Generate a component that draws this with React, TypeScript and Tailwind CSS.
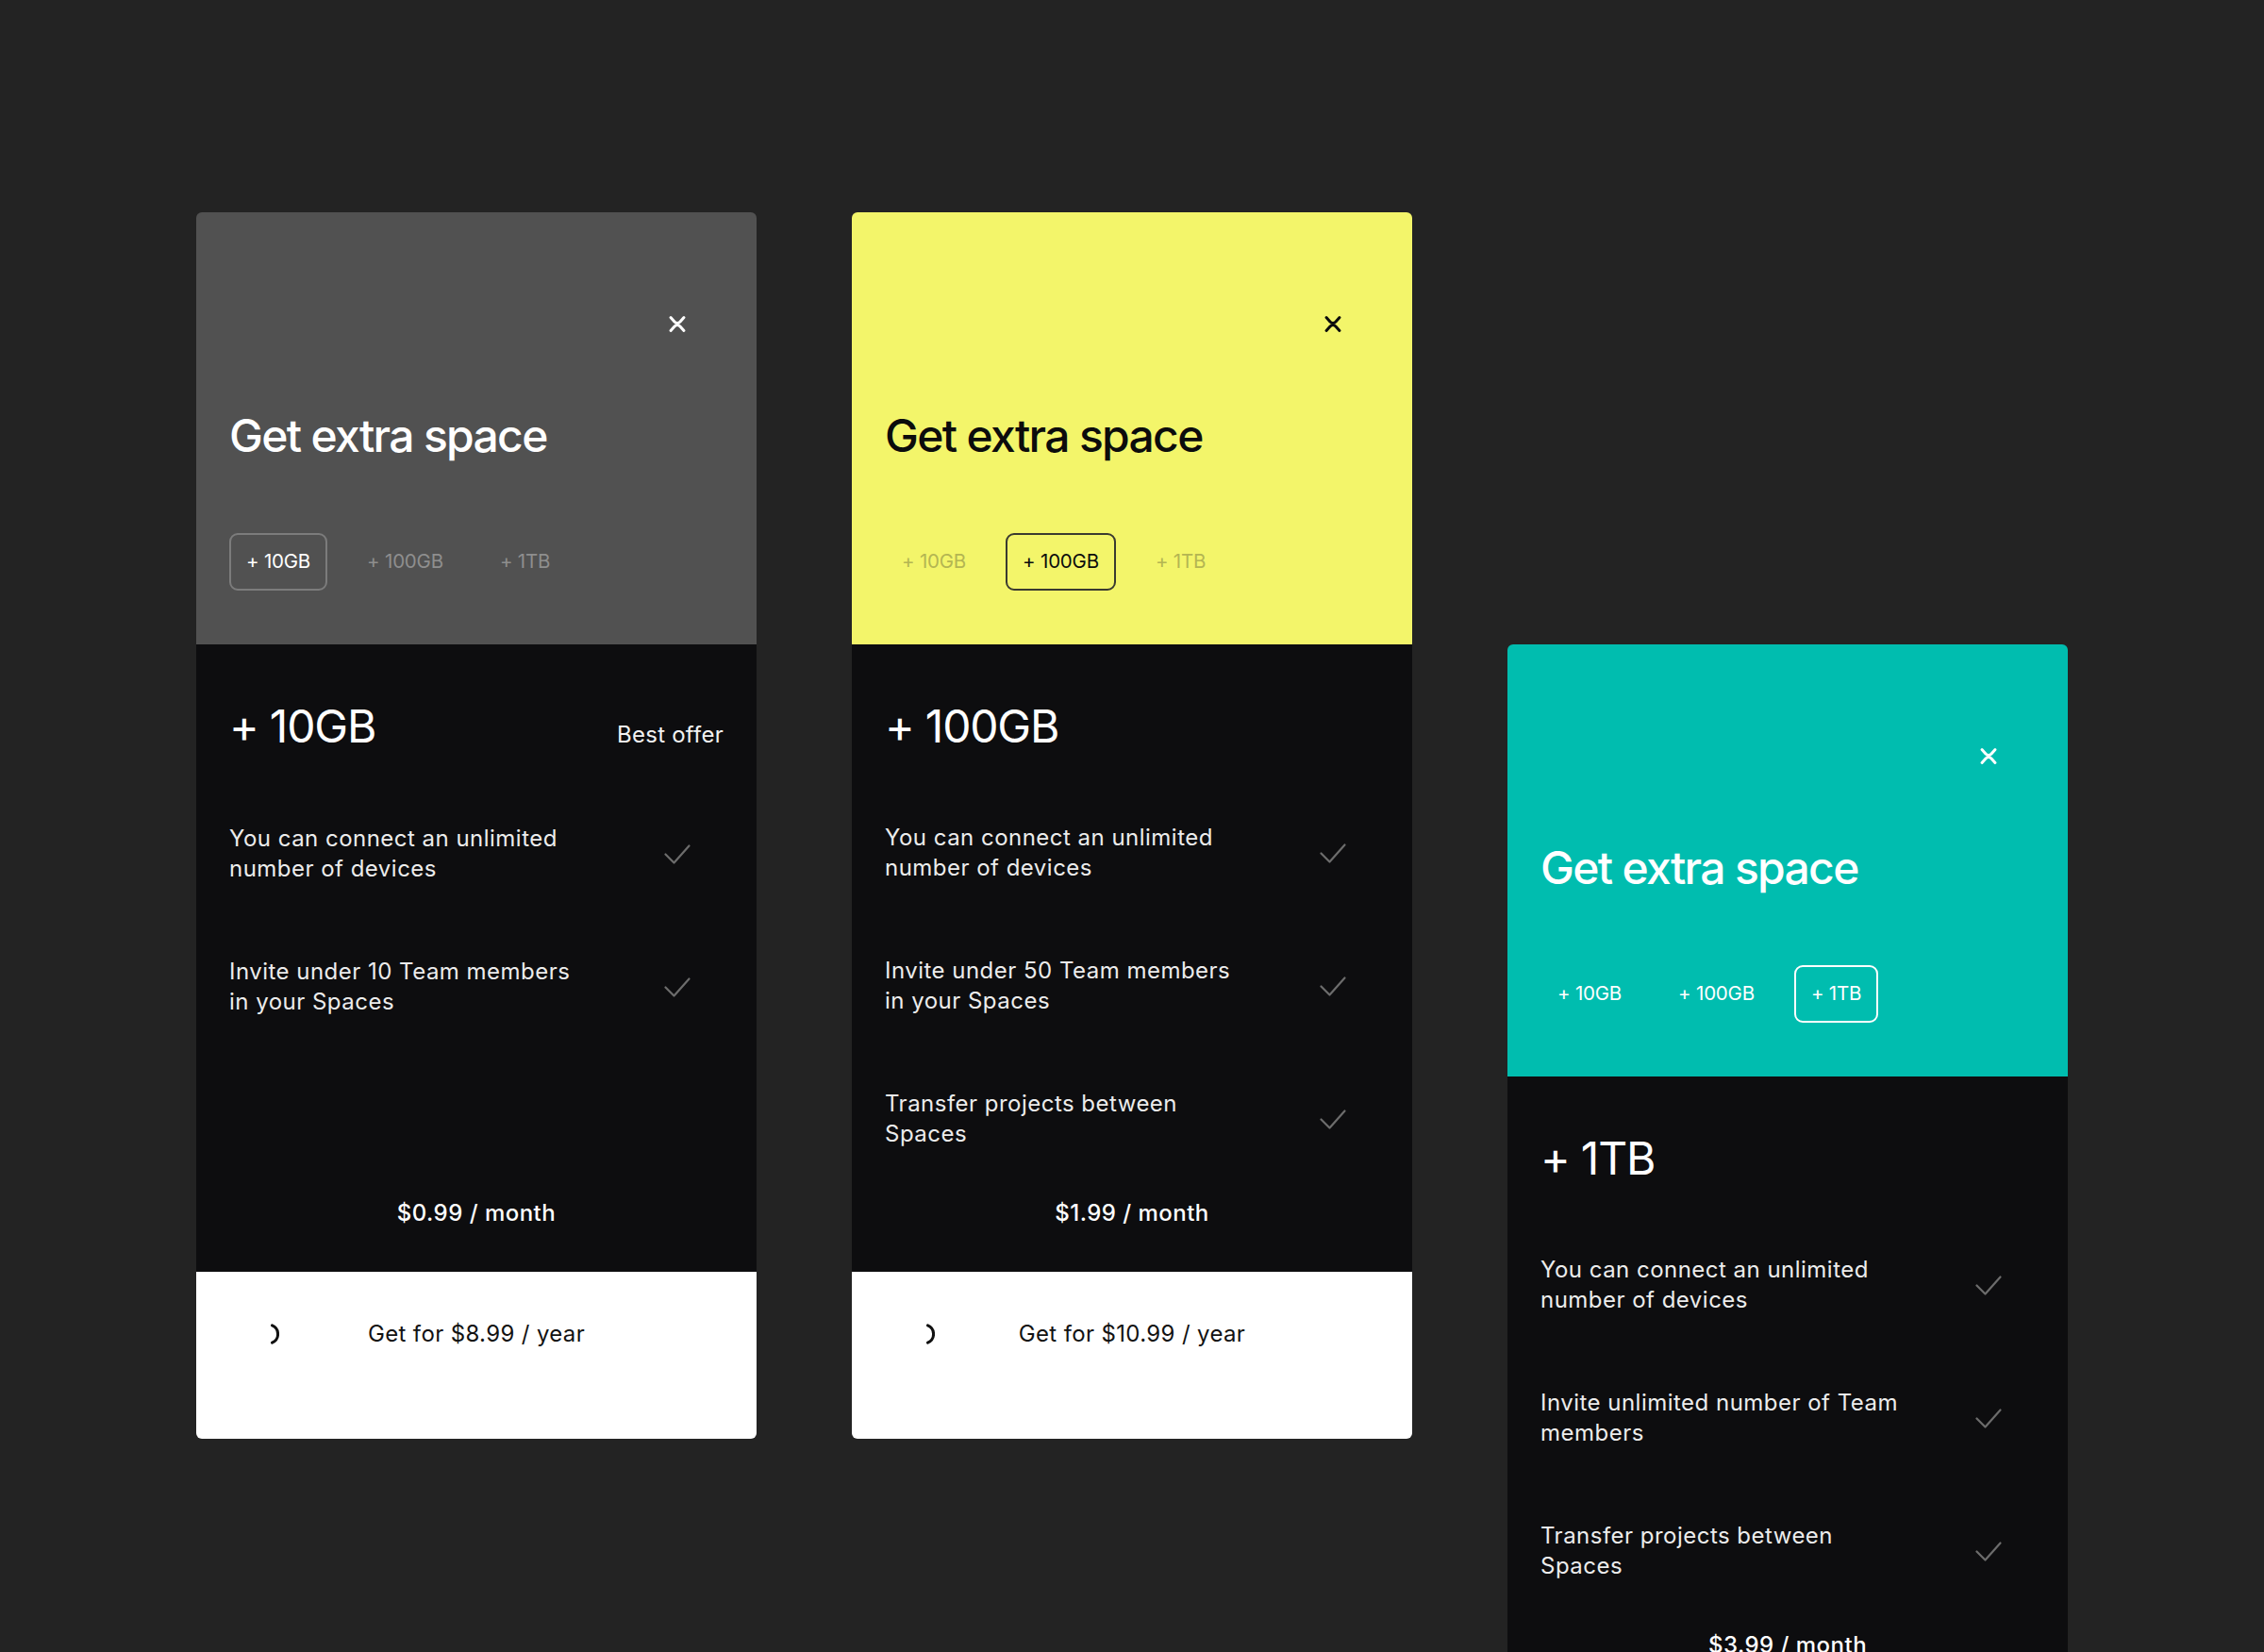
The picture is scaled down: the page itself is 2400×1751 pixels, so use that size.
import React from 'react';

type Theme = {
  header: string;
  title: string;
  close: string;
  tabActive: string;
  tabIdle: string;
};

type Plan = {
  id: string;
  size: string;
  selected: number;
  badge?: string;
  features: string[][];
  monthly: string;
  yearly: string;
  offset: string;
  theme: Theme;
};

const tabs = ['+ 10GB', '+ 100GB', '+ 1TB'];

const plans: Plan[] = [
  {
    id: 'small',
    size: '+ 10GB',
    selected: 0,
    badge: 'Best offer',
    features: [
      ['You can connect an unlimited', 'number of devices'],
      ['Invite under 10 Team members', 'in your Spaces'],
    ],
    monthly: '$0.99 / month',
    yearly: 'Get for $8.99 / year',
    offset: 'mt-0',
    theme: {
      header: 'bg-[#515151]',
      title: 'text-white',
      close: 'text-white',
      tabActive: 'border-[#7c7c7c] text-white',
      tabIdle: 'border-transparent text-[#8e8e8e]',
    },
  },
  {
    id: 'medium',
    size: '+ 100GB',
    selected: 1,
    features: [
      ['You can connect an unlimited', 'number of devices'],
      ['Invite under 50 Team members', 'in your Spaces'],
      ['Transfer projects between', 'Spaces'],
    ],
    monthly: '$1.99 / month',
    yearly: 'Get for $10.99 / year',
    offset: 'mt-0',
    theme: {
      header: 'bg-[#f3f56a]',
      title: 'text-[#0c0c0c]',
      close: 'text-[#0c0c0c]',
      tabActive: 'border-[#3a3a30] text-[#0c0c0c]',
      tabIdle: 'border-transparent text-[#b4b552]',
    },
  },
  {
    id: 'large',
    size: '+ 1TB',
    selected: 2,
    features: [
      ['You can connect an unlimited', 'number of devices'],
      ['Invite unlimited number of Team', 'members'],
      ['Transfer projects between', 'Spaces'],
    ],
    monthly: '$3.99 / month',
    yearly: 'Get for $29.99 / year',
    offset: 'mt-[458px]',
    theme: {
      header: 'bg-[#00bdaf]',
      title: 'text-white',
      close: 'text-white',
      tabActive: 'border-white text-white',
      tabIdle: 'border-transparent text-white',
    },
  },
];

// two chevrons meeting in the middle
const CollapseIcon = () => (
  <svg width="20" height="19" viewBox="0 0 20 19" fill="none" stroke="currentColor" strokeWidth="3" strokeLinecap="round" strokeLinejoin="round">
    <path d="M3 2.5 L7 7 Q10 10.2 13 7 L17 2.5" />
    <path d="M3 16.5 L7 12 Q10 8.8 13 12 L17 16.5" />
  </svg>
);

const CheckIcon = () => (
  <svg width="28" height="21" viewBox="0 0 28 21" fill="none" stroke="#6c6c6c" strokeWidth="2.2" strokeLinecap="round" strokeLinejoin="round">
    <path d="M1.5 10.5 L10.5 19.5 L26.5 1.5" />
  </svg>
);

const Spinner = () => (
  <svg width="24" height="24" viewBox="0 0 24 24" fill="none" stroke="#111" strokeWidth="3" strokeLinecap="round">
    <path d="M16.5 2.8 A10 10 0 0 1 16.5 21.2" />
  </svg>
);

const PlanCard: React.FC<{ plan: Plan }> = ({ plan }) => {
  const { theme } = plan;

  return (
    <div className={`w-[594px] shrink-0 overflow-hidden rounded-[6px] ${plan.offset}`}>
      {/* Header with size switcher */}
      <div className={`flex h-[458px] flex-col px-[35px] pt-[104px] ${theme.header}`}>
        <div className="flex h-[28px] justify-end">
          <div className={`mr-[35px] flex w-[28px] items-center justify-center ${theme.close}`}>
            <CollapseIcon />
          </div>
        </div>
        <h2 className={`mt-[81px] text-[48px] leading-[48px] font-medium tracking-[-0.035em] ${theme.title}`}>
          Get extra space
        </h2>
        <div className="mt-[79px] flex gap-6">
          {tabs.map((tab, i) => (
            <button
              key={tab}
              className={`flex h-[61px] items-center rounded-[9px] border-2 px-[16px] text-[20.5px] leading-none tracking-[-0.01em] ${
                i === plan.selected ? theme.tabActive : theme.tabIdle
              }`}
            >
              {tab}
            </button>
          ))}
        </div>
      </div>

      {/* Plan details */}
      <div className="flex h-[665px] flex-col bg-[#0d0d0f] px-[35px] pt-[63px] pb-[46px] text-white">
        <div className="flex items-baseline justify-between">
          <span className="text-[48px] leading-[48px] tracking-tight">{plan.size}</span>
          {plan.badge && <span className="text-[24px] leading-8 tracking-[0.01em] text-[#f2f2f2]">{plan.badge}</span>}
        </div>
        <div className="mt-[78px] flex flex-col gap-[77px]">
          {plan.features.map((lines) => (
            <div key={lines[0]} className="flex items-center justify-between">
              <p className="text-[24px] leading-8 tracking-[0.02em] text-[#ececec]">
                {lines[0]}
                <br />
                {lines[1]}
              </p>
              <div className="mr-[35px] flex w-[28px] justify-center">
                <CheckIcon />
              </div>
            </div>
          ))}
        </div>
        <p className="mt-auto text-center text-[24px] leading-8 font-medium tracking-[0.02em]">{plan.monthly}</p>
      </div>

      {/* Yearly purchase */}
      <div className="h-[177px] bg-white pt-[42px]">
        <div className="grid h-[48px] grid-cols-[1fr_auto_1fr] items-center">
          <div className="pl-[64px]">
            <Spinner />
          </div>
          <span className="text-[24px] tracking-[0.015em] text-[#121212]">{plan.yearly}</span>
          <div />
        </div>
      </div>
    </div>
  );
};

const App: React.FC = () => {
  return (
    <div className="h-[1751px] w-full overflow-hidden bg-[#232323] font-['Inter',sans-serif]">
      <div className="flex items-start gap-[101px] pt-[225px] pl-[208px]">
        {plans.map((plan) => (
          <PlanCard key={plan.id} plan={plan} />
        ))}
      </div>
    </div>
  );
};

export default App;
